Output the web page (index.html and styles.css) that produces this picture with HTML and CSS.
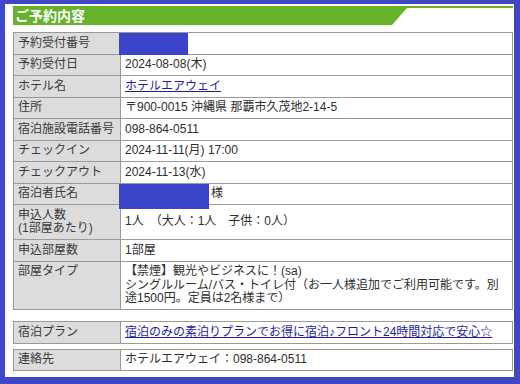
FILE: index.html
```html
<!DOCTYPE html>
<html lang="ja">
<head>
<meta charset="utf-8">
<title>ご予約内容</title>
<link rel="stylesheet" href="styles.css">
</head>
<body>
<div class="panel">
  <div class="head"><h2 class="title">ご予約内容</h2></div>
  <table class="info">
    <tr><th>予約受付番号</th><td class="red"><span class="redact r1"></span>&nbsp;</td></tr>
    <tr><th>予約受付日</th><td>2024-08-08(木)</td></tr>
    <tr><th>ホテル名</th><td><a href="#">ホテルエアウェイ</a></td></tr>
    <tr><th>住所</th><td>〒900-0015 沖縄県 那覇市久茂地2-14-5</td></tr>
    <tr><th>宿泊施設電話番号</th><td>098-864-0511</td></tr>
    <tr><th>チェックイン</th><td>2024-11-11(月) 17:00</td></tr>
    <tr><th>チェックアウト</th><td>2024-11-13(水)</td></tr>
    <tr><th>宿泊者氏名</th><td class="red name"><span class="redact r2"></span>様</td></tr>
    <tr><th>申込人数<br>(1部屋あたり)</th><td>1人　（大人：1人　子供：0人）</td></tr>
    <tr><th>申込部屋数</th><td>1部屋</td></tr>
    <tr><th>部屋タイプ</th><td>【禁煙】観光やビジネスに！(sa)<br>シングルルーム/バス・トイレ付（お一人様追加でご利用可能です。別<br>途1500円。定員は2名様まで）</td></tr>
  </table>
  <table class="info plan">
    <tr><th>宿泊プラン</th><td><a href="#">宿泊のみの素泊りプランでお得に宿泊♪フロント24時間対応で安心☆</a></td></tr>
  </table>
  <table class="info contact">
    <tr><th>連絡先</th><td>ホテルエアウェイ：098-864-0511</td></tr>
  </table>
</div>
</body>
</html>
```
FILE: styles.css
```css
html, body {
  margin: 0;
  background: #3f47c6;
}
body {
  width: 520px;
  height: 384px;
  overflow: hidden;
  font-family: "Liberation Sans", "Noto Sans CJK JP", sans-serif;
  font-size: 12px;
  color: #333;
}
.panel {
  margin: 4px 0 0 5px;
  width: 509px;
  height: 373px;
  box-sizing: border-box;
  padding: 2px 1px 0 8px;
  background: #fff;
}
.head {
  border-top: 2px solid #66b32a;
}
.title {
  margin: 0;
  width: 394px;
  height: 17px;
  box-sizing: border-box;
  padding-left: 2px;
  background: #66b32a;
  clip-path: polygon(0 0, 100% 0, calc(100% - 15px) 100%, 0 100%);
  color: #fff;
  font-size: 14px;
  font-weight: bold;
  line-height: 16px;
}
.info {
  width: 100%;
  border-collapse: collapse;
  margin-top: 7px;
}
.info th, .info td {
  border: 1px solid #9a9a9a;
  padding: 3.5px 4px;
  line-height: 13.5px;
  text-align: left;
  font-weight: normal;
}
.info th {
  width: 98px;
  background: #dcdcdc;
  color: #3a3a3a;
  vertical-align: top;
}
.info td {
  color: #2e2e2e;
  vertical-align: middle;
}
.info a {
  color: #1d1ca8;
}
.plan {
  margin-top: 11px;
}
.contact {
  margin-top: 5px;
}
.red {
  position: relative;
}
.redact {
  position: absolute;
  left: -2px;
  top: 0;
  background: #3b45c9;
}
.r1 {
  width: 69px;
  height: 22px;
}
.r2 {
  width: 90px;
  height: 25px;
  z-index: 1;
}
.name {
  text-indent: 86px;
}
```
